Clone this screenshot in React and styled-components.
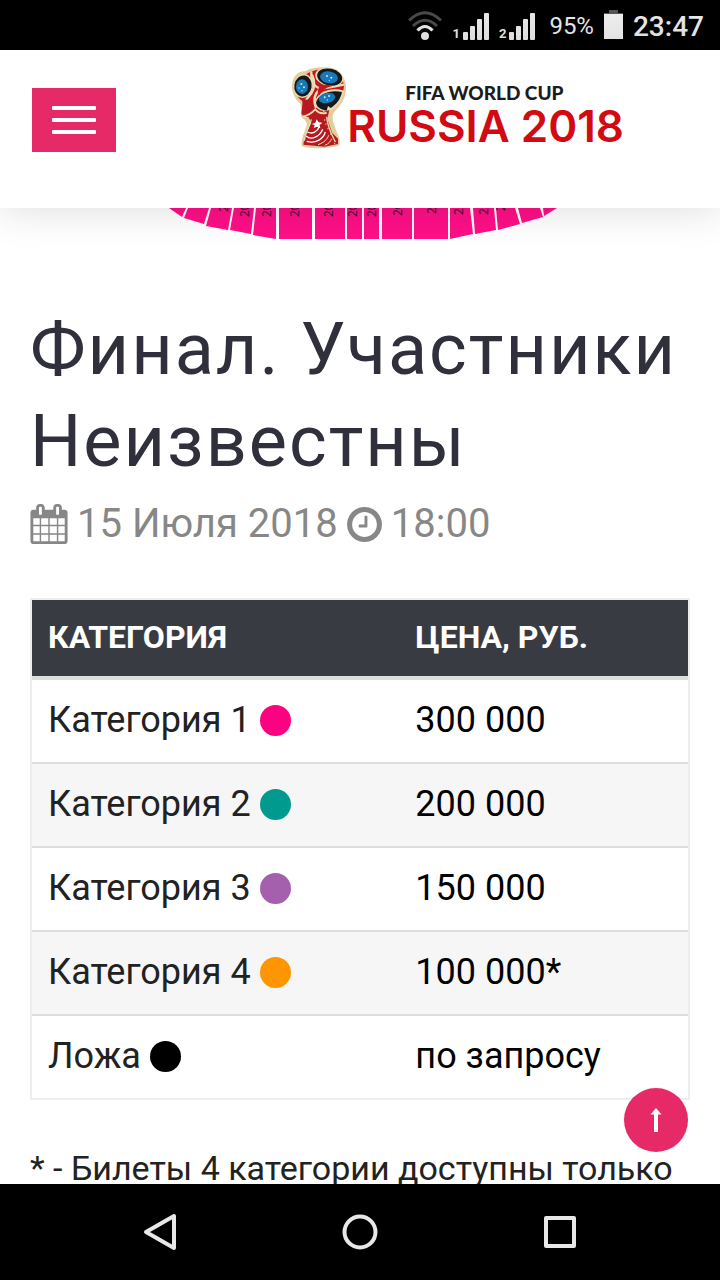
import React from "react";
import styled, { createGlobalStyle } from "styled-components";

const prices = [
  { name: "Категория 1", colour: "#ff0080", price: "300 000" },
  { name: "Категория 2", colour: "#009b8e", price: "200 000" },
  { name: "Категория 3", colour: "#a460ad", price: "150 000" },
  { name: "Категория 4", colour: "#ff9500", price: "100 000*" },
  { name: "Ложа", colour: "#000000", price: "по запросу" }
];

/**
 * Sectors of the stand, listed from left to right.
 */
const sectors = [
  "169,208 186,208 182,217",
  "188,208 209,208 204,224 184,218",
  "211,208 232,208 228,230 206,226",
  "234,208 254,208 251,234 230,230",
  "256,208 276,208 276,239 253,235",
  "279,208 312,208 312,239 279,239",
  "315,208 345,208 345,239 315,239",
  "347,208 362,208 362,239 347,239",
  "364,208 379,208 379,239 364,239",
  "382,208 412,208 412,239 382,239",
  "414,208 448,208 448,239 414,239",
  "450,208 470,208 473,234 450,239",
  "473,208 494,208 496,230 475,234",
  "496,208 515,208 520,224 498,230",
  "518,208 540,208 543,217 522,223",
  "543,208 557,208 544,216"
];

const sectorLabels = [
  [228, 212],
  [249, 217],
  [271, 217],
  [299, 217],
  [333, 217],
  [357, 217],
  [376, 217],
  [402, 216],
  [436, 214],
  [463, 215],
  [488, 215],
  [505, 211]
];

const WifiIcon = () => (
  <svg width="34" height="30" viewBox="0 0 34 30" fill="none" aria-hidden="true">
    <path d="M1 9.500Q17-6 33 9.500" stroke="#4a4a4a" strokeWidth="3" />
    <path d="M5 15Q17 3.500 29 15" stroke="#4a4a4a" strokeWidth="3" />
    <path d="M9.500 19.500Q17 11.500 24.500 19.500" stroke="#e8e8e8" strokeWidth="3.200" />
    <circle cx="17" cy="25" r="4" fill="#e8e8e8" />
  </svg>
);

const SignalIcon = () => (
  <svg width="26" height="27" viewBox="0 0 26 27" fill="#e8e8e8" aria-hidden="true">
    <rect x="0" y="19" width="5" height="8" rx="1" />
    <rect x="7" y="13" width="5" height="14" rx="1" />
    <rect x="14" y="6" width="5" height="21" rx="1" />
    <rect x="21" y="0" width="5" height="27" rx="1" />
  </svg>
);

const BatteryIcon = () => (
  <svg width="19" height="32" viewBox="0 0 19 32" aria-hidden="true">
    <path d="M0 3h5V0h9v3h5v2H0z" fill="#555" />
    <path d="M0 4h19v25H0z" fill="#ededed" />
  </svg>
);

const CalendarIcon = () => (
  <svg width="38" height="40" viewBox="64 0 1664 1792" fill="currentColor" aria-hidden="true">
    <path d="M192 1664h288v-288h-288v288zM544 1664h320v-288h-320v288zM192 1312h288v-320h-288v320zM544 1312h320v-320h-320v320zM192 928h288v-288h-288v288zM928 1664h320v-288h-320v288zM544 928h320v-288h-320v288zM1312 1664h288v-288h-288v288zM928 1312h320v-320h-320v320zM576 448v-288q0-13-9.500-22.500t-22.500-9.500h-64q-13 0-22.500 9.500t-9.500 22.500v288q0 13 9.500 22.500t22.500 9.500h64q13 0 22.500-9.500t9.500-22.500zM1312 1312h288v-320h-288v320zM928 928h320v-288h-320v288zM1312 928h288v-288h-288v288zM1344 448v-288q0-13-9.500-22.500t-22.500-9.500h-64q-13 0-22.500 9.500t-9.500 22.500v288q0 13 9.500 22.500t22.500 9.500h64q13 0 22.500-9.500t9.500-22.500zM1728 384v1280q0 52-38 90t-90 38h-1408q-52 0-90-38t-38-90v-1280q0-52 38-90t90-38h128v-96q0-66 47-113t113-47h64q66 0 113 47t47 113v96h384v-96q0-66 47-113t113-47h64q66 0 113 47t47 113v96h128q52 0 90 38t38 90z" />
  </svg>
);

const ClockIcon = () => (
  <svg width="35" height="35" viewBox="128 128 1536 1536" fill="currentColor" aria-hidden="true">
    <path d="M1024 544v448q0 14-9 23t-23 9h-320q-14 0-23-9t-9-23v-64q0-14 9-23t23-9h224v-352q0-14 9-23t23-9h64q14 0 23 9t9 23zm416 352q0-148-73-273t-198-198-273-73-273 73-198 198-73 273 73 273 198 198 273 73 273-73 198-198 73-273zm224 0q0 209-103 385.500t-279.500 279.500-385.500 103-385.500-103-279.500-279.500-103-385.500 103-385.500 279.500-279.500 385.500-103 385.500 103 279.500 279.500 103 385.500z" />
  </svg>
);

const Emblem = () => (
  <svg width="56" height="84" viewBox="31 26 168 252" aria-hidden="true">
    <path
      d="M34 86C35 58 52 40 74 42C88 33 106 30 126 30C164 31 194 52 196 86C197 116 186 138 166 158C152 172 155 184 160 200C166 224 180 240 177 263C150 275 90 276 63 267C60 240 75 222 79 200C76 188 68 184 62 180L60 140C44 126 34 108 34 86Z"
      fill="#e3cd9c"
    />
    <path d="M60 66C78 42 112 34 140 36C170 42 188 62 190 86C186 118 178 132 166 142L150 152L132 158L104 184L62 170L66 132C46 120 40 100 60 66Z" fill="#c4161c" />
    <path d="M92 42C90 72 98 88 120 94C152 90 172 86 190 82M94 52C106 76 102 92 92 108L76 128M120 94C104 106 96 126 106 152" fill="none" stroke="#ecdcb4" strokeWidth="7" />
    <ellipse cx="68" cy="86" rx="29" ry="36" fill="#ecdcb4" transform="rotate(10 68 86)" />
    <ellipse cx="67" cy="86" rx="26" ry="32" fill="#15191c" transform="rotate(10 67 86)" />
    <ellipse cx="64" cy="88" rx="18" ry="22" fill="#1779b8" />
    <ellipse cx="146" cy="59" rx="43" ry="28" fill="#ecdcb4" transform="rotate(12 146 59)" />
    <ellipse cx="147" cy="59" rx="38" ry="25" fill="#15191c" transform="rotate(12 147 59)" />
    <ellipse cx="145" cy="60" rx="27" ry="18" fill="#1779b8" transform="rotate(8 145 60)" />
    <path d="M102 136C108 104 150 88 190 100C186 126 172 146 152 158L132 162C112 158 103 150 102 136Z" fill="#ecdcb4" />
    <path d="M106 136C112 110 150 96 184 104C180 126 166 142 150 152L142 146L138 160C118 156 108 148 106 136Z" fill="#15191c" />
    <ellipse cx="139" cy="122" rx="25" ry="15" fill="#1779b8" transform="rotate(-12 139 122)" />
    <g fill="#c9e8f5">
      <circle cx="62" cy="80" r="3" />
      <circle cx="70" cy="90" r="3" />
      <circle cx="55" cy="92" r="2" />
      <circle cx="64" cy="100" r="2" />
      <circle cx="139" cy="56" r="3" />
      <circle cx="152" cy="61" r="3" />
      <circle cx="146" cy="69" r="2" />
      <circle cx="132" cy="120" r="3" />
      <circle cx="145" cy="116" r="3" />
      <circle cx="140" cy="128" r="2" />
    </g>
    <path d="M116 86l18-4 30 2-22 6-18 10-8 14-5-12z" fill="#c4161c" />
    <path d="M64 128L92 126L100 156L128 164L146 158L140 184L154 226L172 244V260L132 268L68 262L72 236L92 196L84 180L64 176L72 156Z" fill="#b71920" />
    <path d="M64 178C84 176 96 164 104 156C112 166 124 170 138 166" fill="none" stroke="#ecdcb4" strokeWidth="6" />
    <path d="M92 186C84 218 72 228 71 250M138 178C140 210 154 232 164 254" fill="none" stroke="#ecdcb4" strokeWidth="4" />
    <path d="M76 236C92 250 118 238 126 216M80 224C96 232 110 222 116 208M78 252C104 260 128 246 134 224" fill="none" stroke="#fff" strokeWidth="4" />
    <path d="M94 200l10-4 4-10 6 9 11 1-8 7 2 10-10-5-10 4 3-8z" fill="#fff" />
    <path d="M112 262C130 256 140 246 144 234M132 264C144 260 150 252 153 244" fill="none" stroke="#ecdcb4" strokeWidth="3" />
    <g fill="#ecdcb4">
      <circle cx="132" cy="188" r="2" />
      <circle cx="136" cy="200" r="2" />
      <circle cx="142" cy="214" r="2" />
      <circle cx="150" cy="230" r="2" />
      <circle cx="162" cy="258" r="2" />
    </g>
  </svg>
);

const SeatMap = () => (
  <Stand width="400" height="31" viewBox="160 208 400 31" aria-hidden="true">
    {sectors.map(points => (
      <polygon key={points} points={points} fill="#ff0f87" />
    ))}
    {sectorLabels.map(([x, y]) => (
      <text key={x} transform={`translate(${x} ${y}) rotate(-90)`}>
        20
      </text>
    ))}
  </Stand>
);

const App = () => (
  <Screen>
    <GlobalStyle />
    <StatusBar>
      <WifiIcon />
      <Sim>
        1<SignalIcon />
      </Sim>
      <Sim>
        2<SignalIcon />
      </Sim>
      <Charge>95%</Charge>
      <BatteryIcon />
      <Time>23:47</Time>
    </StatusBar>

    <Header>
      <MenuButton type="button" aria-label="Меню">
        <MenuLine />
        <MenuLine />
        <MenuLine />
      </MenuButton>
      <Logo href="#">
        <Emblem />
        <LogoText>
          <LogoTop>FIFA WORLD CUP</LogoTop>
          <LogoName>RUSSIA 2018</LogoName>
        </LogoText>
      </Logo>
    </Header>

    <Viewport>
      <Page>
        <SeatMap />
        <Title>Финал. Участники Неизвестны</Title>
        <Schedule>
          <CalendarIcon />
          <span>15 Июля 2018</span>
          <ClockIcon />
          <span>18:00</span>
        </Schedule>
        <PriceTable>
          <thead>
            <tr>
              <HeadCell>Категория</HeadCell>
              <HeadCell>Цена, руб.</HeadCell>
            </tr>
          </thead>
          <tbody>
            {prices.map(row => (
              <Row key={row.name}>
                <Cell>
                  <Category>
                    {row.name}
                    <Dot $colour={row.colour} />
                  </Category>
                </Cell>
                <Cell $dark>{row.price}</Cell>
              </Row>
            ))}
          </tbody>
        </PriceTable>
        <Note>* - Билеты 4 категории доступны только</Note>
      </Page>
      <TopButton type="button" aria-label="Наверх">
        <svg width="12" height="24" viewBox="0 0 12 24" fill="#fff" aria-hidden="true">
          <path d="M6 0L11.500 6.500H8V24H4V6.500H0.500z" />
        </svg>
      </TopButton>
    </Viewport>

    <NavBar>
      <NavButton type="button" aria-label="Назад">
        <svg width="40" height="40" viewBox="0 0 40 40">
          <path d="M34 4V36L6 20z" />
        </svg>
      </NavButton>
      <NavButton type="button" aria-label="Домой">
        <svg width="40" height="40" viewBox="0 0 40 40">
          <circle cx="20" cy="20" r="15.500" />
        </svg>
      </NavButton>
      <NavButton type="button" aria-label="Недавние">
        <svg width="40" height="40" viewBox="0 0 40 40">
          <rect x="6" y="6" width="28" height="28" />
        </svg>
      </NavButton>
    </NavBar>
  </Screen>
);

export default App;

const GlobalStyle = createGlobalStyle`
  * {
    box-sizing: border-box;
  }

  body {
    margin: 0;
    background-color: #fff;
    font-family: Roboto, "Liberation Sans", sans-serif;
    color: #222;
  }

  svg {
    display: block;
    flex-shrink: 0;
  }

  button {
    padding: 0;
    border: 0;
  }
`;

/**
 * The whole screen: system bars and site header stay put, the page takes the rest.
 */
const Screen = styled.div`
  height: 100vh;
  display: flex;
  flex-direction: column;
`;

const StatusBar = styled.div`
  height: 50px;
  padding: 2px 16px 0;
  flex-shrink: 0;
  background-color: #000;
  color: #e8e8e8;

  display: flex;
  justify-content: flex-end;
  align-items: center;
  gap: 10px;
`;

const Sim = styled.span`
  display: flex;
  align-items: flex-end;
  gap: 3px;
  font-size: 13px;
  font-weight: 700;
  line-height: 12px;
`;

const Charge = styled.span`
  padding-left: 4px;
  font-size: 24px;
`;

const Time = styled.span`
  font-size: 28px;
  font-weight: 500;
`;

const Header = styled.header`
  position: relative;
  z-index: 1;
  height: 158px;
  padding: 16px 32px;
  flex-shrink: 0;
  background-color: #fff;
  box-shadow: 0 0 40px rgba(0, 0, 0, 0.15);

  display: flex;
  justify-content: space-between;
  align-items: flex-start;
`;

const MenuButton = styled.button`
  width: 84px;
  height: 64px;
  margin-top: 22px;
  background-color: #e62a68;

  display: flex;
  flex-direction: column;
  justify-content: center;
  align-items: center;
  gap: 8px;
`;

const MenuLine = styled.span`
  width: 44px;
  height: 4px;
  border-radius: 1px;
  background-color: #fff;
`;

const Logo = styled.a`
  margin-right: 64px;
  text-decoration: none;
  display: flex;
`;

const LogoText = styled.span`
  padding-top: 16px;
  display: flex;
  flex-direction: column;
  white-space: nowrap;
`;

const LogoTop = styled.span`
  padding-left: 58px;
  font-family: Lato, "Liberation Sans", sans-serif;
  font-size: 19px;
  font-weight: 900;
  line-height: 22px;
  color: #1c1c1c;
`;

const LogoName = styled.span`
  font-family: Inter, "Liberation Sans", sans-serif;
  font-size: 44px;
  font-weight: 600;
  line-height: 44px;
  color: #d20a11;
`;

const Viewport = styled.main`
  position: relative;
  flex: 1;
  min-height: 0;
  display: flex;
  flex-direction: column;
`;

const Page = styled.div`
  flex: 1;
  min-height: 0;
  padding: 0 30px;
  overflow: hidden;
`;

const Stand = styled.svg`
  margin: 0 auto;

  text {
    font-family: "Open Sans", sans-serif;
    font-size: 12px;
    fill: #3a1030;
  }
`;

const Title = styled.h1`
  margin: 65px 0 10px;
  font-size: 72px;
  font-weight: 400;
  line-height: 92px;
  letter-spacing: 2px;
  color: #2f303b;
`;

const Schedule = styled.div`
  margin-bottom: 48px;
  font-size: 40px;
  line-height: 52px;
  color: #878787;

  display: flex;
  align-items: center;
  gap: 9px;
`;

const PriceTable = styled.table`
  width: 100%;
  table-layout: fixed;
  border: 2px solid #eee;
  border-spacing: 0;
  text-align: left;
`;

const HeadCell = styled.th`
  padding: 15px 16px 17px;
  border-bottom: 4px solid #ddd;
  background-color: #393b43;
  font-size: 32px;
  font-weight: 700;
  line-height: 44px;
  text-transform: uppercase;
  color: #fff;

  &:first-child {
    width: 56%;
  }
`;

const Row = styled.tr`
  &:nth-child(even) {
    background-color: #f6f6f6;
  }

  & + & td {
    border-top: 2px solid #ddd;
  }
`;

const Cell = styled.td`
  padding: 15px 16px 17px;
  font-size: 36px;
  line-height: 50px;
  color: ${props => (props.$dark ? "#000" : "#222")};
`;

const Category = styled.div`
  display: flex;
  align-items: center;
  gap: 9px;
`;

const Dot = styled.span`
  width: 31px;
  height: 31px;
  border-radius: 50%;
  background-color: ${props => props.$colour};
`;

const Note = styled.p`
  margin: 43px 0 0;
  font-size: 34px;
  line-height: 50px;
  white-space: nowrap;
`;

const TopButton = styled.button`
  position: absolute;
  right: 32px;
  bottom: 32px;
  width: 64px;
  height: 64px;
  border-radius: 50%;
  background-color: #e62a68;

  display: flex;
  justify-content: center;
  align-items: center;
`;

const NavBar = styled.nav`
  height: 96px;
  padding: 0 60px;
  flex-shrink: 0;
  background-color: #000;

  display: flex;
`;

const NavButton = styled.button`
  flex: 1;
  background: none;

  display: flex;
  justify-content: center;
  align-items: center;

  svg {
    fill: none;
    stroke: #e8e8e8;
    stroke-width: 4;
    stroke-linejoin: round;
  }
`;
